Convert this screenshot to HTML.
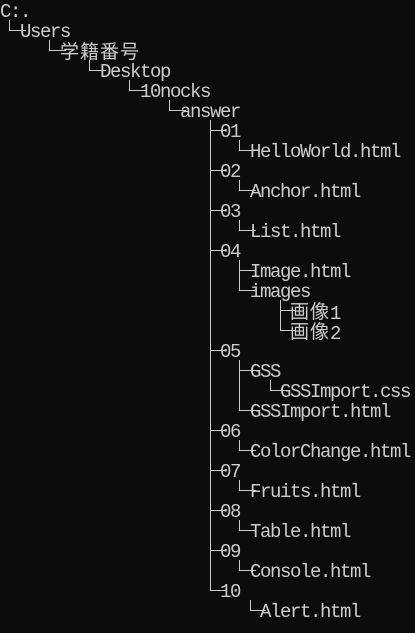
<!DOCTYPE html>
<html><head><meta charset="utf-8"><style>
html,body{margin:0;padding:0;background:#0c0c0c;width:415px;height:633px;overflow:hidden}
.t{position:absolute;height:20px;line-height:20px;color:#cccccc;font-family:"Liberation Mono",monospace;font-size:19px;letter-spacing:-1.4px;white-space:pre}
.j{font-family:"Noto Sans CJK JP",sans-serif;font-size:19px;letter-spacing:1px;position:relative;top:-1px}
.v{position:absolute;width:1px;background:#cccccc}
.h{position:absolute;height:1px;background:#cccccc}
</style></head><body>
<div id="c"></div>
<script>
var rows=[
[0,0,null,'','C:.'],
[1,20,9,'L','Users'],
[2,60,49,'L','<span class="j">学籍番号</span>'],
[3,100,89,'L','Desktop'],
[4,140,129,'L','10nocks'],
[5,180,169,'L','answer'],
[6,220,210,'T','01'],
[7,250,239,'L','HelloWorld.html'],
[8,220,210,'T','02'],
[9,250,239,'L','Anchor.html'],
[10,220,210,'T','03'],
[11,250,239,'L','List.html'],
[12,220,210,'T','04'],
[13,250,239,'T','Image.html'],
[14,250,239,'L','images'],
[15,290,280,'T','<span class="j">画像</span>1'],
[16,290,280,'L','<span class="j">画像</span>2'],
[17,220,210,'T','05'],
[18,250,239,'T','GSS'],
[19,280,270,'L','GSSImport.css'],
[20,250,239,'L','GSSImport.html'],
[21,220,210,'T','06'],
[22,250,239,'L','ColorChange.html'],
[23,220,210,'T','07'],
[24,250,239,'L','Fruits.html'],
[25,220,210,'T','08'],
[26,250,239,'L','Table.html'],
[27,220,210,'T','09'],
[28,250,239,'L','Console.html'],
[29,220,210,'L','10'],
[30,260,250,'L','Alert.html']
];
var h='';
rows.forEach(function(r){
 var y=r[0]*20;
 h+='<div class="t" style="left:'+r[1]+'px;top:'+(y+2)+'px">'+r[4]+'</div>';
 if(r[2]!==null){
  var cx=r[2];
  if(r[3]=='L') h+='<div class="v" style="left:'+cx+'px;top:'+y+'px;height:11px"></div>';
  else h+='<div class="v" style="left:'+cx+'px;top:'+y+'px;height:20px"></div>';
  h+='<div class="h" style="left:'+cx+'px;top:'+(y+10)+'px;width:'+(r[1]-cx+6)+'px"></div>';
 }
});
function v(x,y1,y2){h+='<div class="v" style="left:'+x+'px;top:'+y1+'px;height:'+(y2-y1)+'px"></div>';}
v(210,120,590);
v(239,260,290);
v(239,360,410);
document.getElementById('c').innerHTML=h;
</script>
</body></html>
